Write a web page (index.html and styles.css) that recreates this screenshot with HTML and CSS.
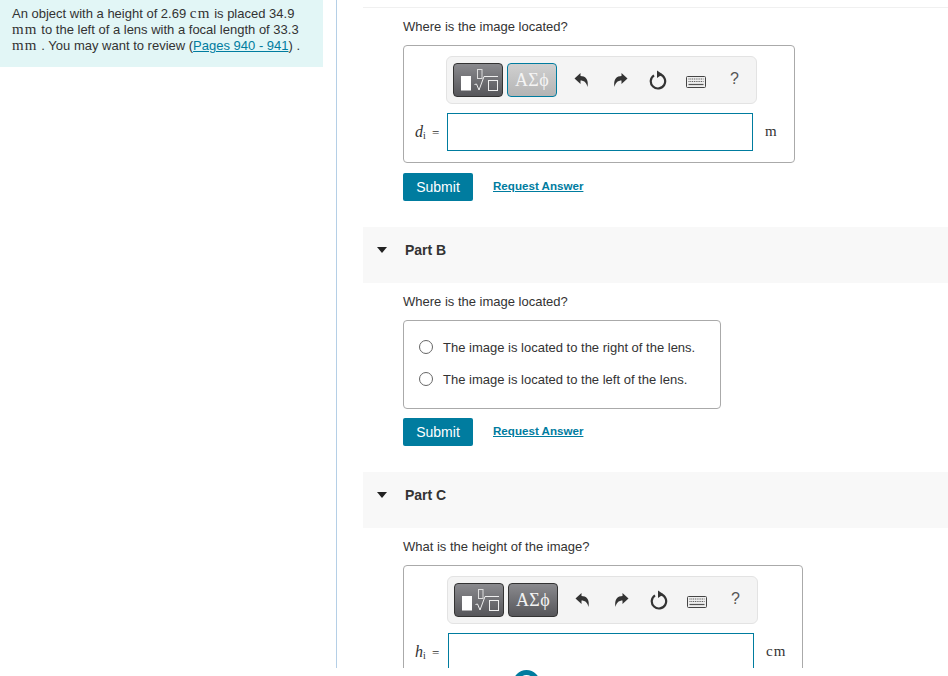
FILE: index.html
```html
<!DOCTYPE html>
<html lang="en">
<head>
<meta charset="utf-8">
<title>Lens problem</title>
<link rel="stylesheet" href="styles.css">
</head>
<body>
<svg class="sprites" aria-hidden="true">
  <symbol id="i-templ" viewBox="0 0 48 32">
    <rect x="7" y="12" width="10" height="14.500" fill="#fff"/>
    <rect x="23.500" y="5.500" width="4.500" height="9" fill="none" stroke="#ddd" stroke-width="1"/>
    <path d="M20.500 20.500l2-.5 2.500 6 5-13.500h14" fill="none" stroke="#eee" stroke-width="1"/>
    <rect x="34.500" y="16.500" width="9" height="10" fill="none" stroke="#eee" stroke-width="1"/>
  </symbol>
  <symbol id="i-undo" viewBox="0 0 16 16">
    <path d="M.5 6.500L6.500 1V4C11 4 15 7 13.500 15 12.500 10.500 10 8.500 6.500 8.500V12z" fill="#333"/>
  </symbol>
  <symbol id="i-redo" viewBox="0 0 16 16">
    <path d="M15.500 6.500L9.500 1V4C5 4 1 7 2.500 15 3.500 10.500 6 8.500 9.500 8.500V12z" fill="#333"/>
  </symbol>
  <symbol id="i-reset" viewBox="0 0 18 20">
    <path d="M5 5.300a7.200 7.200 0 1 0 6-.9" fill="none" stroke="#333" stroke-width="2.200"/>
    <path d="M8 .5L13.500 4.300 8 8z" fill="#333"/>
  </symbol>
  <symbol id="i-keys" viewBox="0 0 20 12">
    <rect x=".5" y=".5" width="19" height="11" rx="1" fill="#eee" stroke="#444"/>
    <path d="M2.500 3h15M2.500 5.500h15" stroke="#555" stroke-width="1.200" stroke-dasharray="1 .8"/>
    <path d="M2.500 8.500h15" stroke="#555" stroke-width="1.200"/>
  </symbol>
</svg>

<div class="page">
  <aside class="side">
    <div class="intro">
      An object with a height of 2.69 <span class="unit">cm</span> is placed 34.9 <span class="unit">mm</span> to the left of a lens with a focal length of 33.3 <span class="unit">mm</span> . You may want to review (<a href="#">Pages 940 - 941</a>) .
    </div>
  </aside>

  <main class="main">
    <section class="part part-a">
      <p class="question">Where is the image located?</p>
      <div class="answer answer-a">
        <div class="toolbar">
          <span class="tool"><svg class="templ"><use href="#i-templ"/></svg></span>
          <span class="tool sym sym-off">ΑΣϕ</span>
          <svg class="ic ic-undo"><use href="#i-undo"/></svg>
          <svg class="ic ic-redo"><use href="#i-redo"/></svg>
          <svg class="ic ic-reset"><use href="#i-reset"/></svg>
          <svg class="ic ic-keys"><use href="#i-keys"/></svg>
          <span class="help">?</span>
        </div>
        <div class="entry">
          <span class="var"><i>d</i><sub>i</sub> =</span>
          <span class="input"></span>
          <span class="unit unit-end">m</span>
        </div>
      </div>
      <div class="actions">
        <button class="submit">Submit</button>
        <a class="request" href="#">Request Answer</a>
      </div>
    </section>

    <header class="band"><span class="caret"></span><h2>Part B</h2></header>
    <section class="part part-b">
      <p class="question">Where is the image located?</p>
      <div class="answer choices">
        <label class="choice"><span class="radio"></span>The image is located to the right of the lens.</label>
        <label class="choice"><span class="radio"></span>The image is located to the left of the lens.</label>
      </div>
      <div class="actions actions-b">
        <button class="submit">Submit</button>
        <a class="request" href="#">Request Answer</a>
      </div>
    </section>

    <header class="band"><span class="caret"></span><h2>Part C</h2></header>
    <section class="part part-c">
      <p class="question">What is the height of the image?</p>
      <div class="answer answer-c">
        <div class="toolbar">
          <span class="tool"><svg class="templ"><use href="#i-templ"/></svg></span>
          <span class="tool sym">ΑΣϕ</span>
          <svg class="ic ic-undo"><use href="#i-undo"/></svg>
          <svg class="ic ic-redo"><use href="#i-redo"/></svg>
          <svg class="ic ic-reset"><use href="#i-reset"/></svg>
          <svg class="ic ic-keys"><use href="#i-keys"/></svg>
          <span class="help">?</span>
        </div>
        <div class="entry">
          <span class="var"><i>h</i><sub>i</sub> =</span>
          <span class="input"></span>
          <span class="unit unit-end">cm</span>
        </div>
      </div>
    </section>
  </main>
  <span class="peek"></span>
</div>
</body>
</html>
```

FILE: styles.css
```css
* { box-sizing: border-box; }
html, body { margin: 0; padding: 0; background: #fff; }
body {
  height: 676px;
  overflow: hidden;
  font-family: "Liberation Sans", Arial, sans-serif;
  font-size: 13px;
  color: #333;
}
.sprites { position: absolute; width: 0; height: 0; }
.page { position: relative; display: flex; height: 676px; overflow: hidden; }

.side {
  flex: 0 0 337px;
  height: 668px;
  border-right: 1px solid #b5cfe6;
}
.intro {
  width: 323px;
  height: 67px;
  padding: 6px 12px 0;
  background: #e2f6f6;
  line-height: 16px;
}
.intro a, .request { color: #007c9f; text-decoration: underline; }
.unit {
  font-family: "Liberation Serif", serif;
  font-size: 15px;
  letter-spacing: 1.200px;
  line-height: 1;
}

.main {
  flex: 1 1 auto;
  height: 668px;
  overflow: hidden;
  padding: 7px 0 0 26px;
}
.part { padding-left: 40px; }
.part-a { border-top: 1px solid #f0f0f0; }
.question { margin: 0; padding-top: 10px; line-height: 18px; }

.answer {
  margin-top: 9px;
  border: 1px solid #aaa;
  border-radius: 4px;
  background: #fff;
}
.answer-a { width: 392px; height: 118px; padding: 10px 0 0 42px; }
.answer-c { width: 400px; height: 130px; padding: 10px 0 0 43px; }

.toolbar {
  display: flex;
  align-items: center;
  width: 311px;
  height: 48px;
  padding: 5px 6px;
  background: #f4f4f4;
  border: 1px solid #e3e3e3;
  border-radius: 6px;
}
.tool {
  display: flex;
  align-items: center;
  justify-content: center;
  flex: 0 0 50px;
  height: 34px;
  margin-right: 4px;
  border: 1px solid #333;
  border-radius: 4px;
  background: linear-gradient(#8a8a8e, #56565a);
}
.templ { width: 48px; height: 32px; display: block; flex: none; }
.sym {
  font-family: "Liberation Serif", serif;
  font-size: 18px;
  color: #f2f2f2;
  letter-spacing: .4px;
}
.sym-off {
  border-color: #007c9f;
  background: linear-gradient(#d0d0d0, #b4b4b4);
  color: #f4f4f4;
}
.ic { display: block; flex: none; }
.ic-undo { width: 16px; height: 16px; margin-left: 13px; }
.ic-redo { width: 16px; height: 16px; margin-left: 22px; }
.ic-reset { width: 18px; height: 20px; margin-left: 21px; }
.ic-keys { width: 20px; height: 12px; margin-left: 19px; margin-top: 3px; }
.help { margin-left: 24px; font-size: 16px; color: #555; position: relative; top: -1px; }

.entry { display: flex; align-items: center; margin: 9px 0 0 -42px; height: 38px; }
.answer-c .entry { margin-left: -43px; }
.var {
  flex: 0 0 43px;
  padding-left: 11px;
  font-family: "Liberation Serif", serif;
  font-size: 13px;
  white-space: nowrap;
}
.answer-c .var { flex-basis: 44px; }
.var i { font-size: 16px; }
.var sub { font-size: 10px; line-height: 0; vertical-align: -2px; margin-right: 3px; }
.input { flex: 0 0 306px; height: 38px; border: 1px solid #007c9f; background: #fff; }
.unit-end { margin-left: 12px; position: relative; top: -1px; }

.actions { display: flex; align-items: center; margin-top: 10px; height: 28px; }
.actions-b { margin-top: 9px; }
.submit {
  width: 70px;
  height: 28px;
  padding: 0;
  border: 0;
  border-radius: 2px;
  background: #007c9f;
  color: #fff;
  font: 14px "Liberation Sans", Arial, sans-serif;
}
.request { margin-left: 20px; font-size: 11.600px; font-weight: bold; position: relative; top: -2px; }

.band {
  display: flex;
  align-items: center;
  height: 56px;
  margin-top: 26px;
  padding: 0 0 11px 14px;
  background: #f8f8f8;
}
.caret {
  width: 0; height: 0;
  margin-right: 18px;
  border-left: 5px solid transparent;
  border-right: 5px solid transparent;
  border-top: 6px solid #222;
}
.band h2 { margin: 0; font-size: 14px; font-weight: bold; color: #333; }

.choices { width: 318px; height: 89px; padding: 10px 0 0 15px; }
.choice { display: flex; align-items: center; height: 32px; }
.radio {
  width: 14px; height: 14px;
  margin-right: 10px;
  border: 1.500px solid #666;
  border-radius: 50%;
  background: #fff;
}

.peek {
  position: absolute;
  left: 513px;
  top: 670px;
  width: 27px;
  height: 27px;
  border: 5px solid #007c9f;
  border-radius: 50%;
}
```
